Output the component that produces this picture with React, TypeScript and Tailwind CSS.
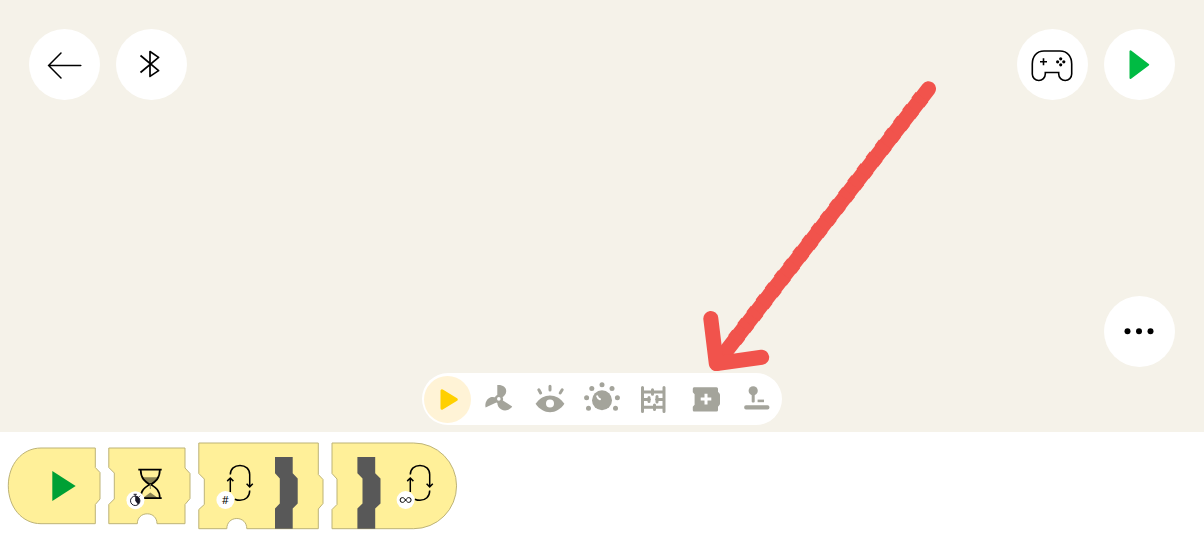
import React from 'react';

const toolbarItems = [
  { label: 'Start blocks', icon: <StartIcon /> },
  { label: 'Motor blocks', icon: <MotorIcon /> },
  { label: 'Sensor blocks', icon: <SensorIcon /> },
  { label: 'Light blocks', icon: <LightIcon /> },
  { label: 'Music blocks', icon: <TracksIcon /> },
  { label: 'Custom blocks', icon: <CustomIcon /> },
  { label: 'Control blocks', icon: <ControlIcon /> }
];

function StartIcon() {
  return (
    <svg viewBox="0 0 41 41" className="size-[41px]">
      <path d="M15 11.8V29.3L29.3 20.5Z" fill="#ffd000" stroke="#ffd000" strokeWidth="3" strokeLinejoin="round" />
    </svg>
  );
}

function MotorIcon() {
  return (
    <svg viewBox="0 0 41 41" className="size-[41px]" fill="#a4a49b">
      <path d="M18.3 6C23.5 5.6 27.6 8.3 27.2 12.4C27 15.3 25.2 17.2 23 18.2L18.3 17Z" />
      <path d="M6.6 28.6C5.6 24 8 19.6 11.6 18.3C13.3 17.6 15.4 17.9 16.9 18.5L17.3 23.6Z" />
      <path d="M33.2 27.4C30.2 31.5 25.8 32.5 22 30.2C19.3 28.5 18.2 26 18.4 23.4L23 21Z" />
      <circle cx="19.8" cy="20" r="4.3" />
      <circle cx="19.8" cy="19.9" r="1.8" fill="white" />
    </svg>
  );
}

function SensorIcon() {
  return (
    <svg viewBox="0 0 41 41" className="size-[41px]">
      <path d="M5.6 24.8C13 13.6 27 13.6 34.4 24.8C27 36 13 36 5.6 24.8Z" fill="#a4a49b" />
      <circle cx="20" cy="24.6" r="4" fill="white" />
      <path d="M20 7.2V11M8.8 10.8L10.6 14M32.2 10.8L30.2 14" stroke="#a4a49b" strokeWidth="3" strokeLinecap="round" />
    </svg>
  );
}

function LightIcon() {
  return (
    <svg viewBox="0 0 41 41" className="size-[41px]" fill="#a4a49b">
      <circle cx="20" cy="21.2" r="10" />
      <circle cx="20" cy="5.8" r="2.5" />
      <circle cx="9.8" cy="9.6" r="2.5" />
      <circle cx="30" cy="9.6" r="2.5" />
      <circle cx="4.6" cy="18.8" r="2.5" />
      <circle cx="35.4" cy="18.8" r="2.5" />
      <circle cx="6.5" cy="29.3" r="2.5" />
      <circle cx="33.5" cy="29.3" r="2.5" />
      <path d="M15.2 17.2Q15.8 19.4 18 20.2" fill="none" stroke="white" strokeWidth="2" strokeLinecap="round" />
    </svg>
  );
}

function TracksIcon() {
  return (
    <svg viewBox="0 0 41 41" className="size-[41px]">
      <path
        d="M9.5 8.5V32.5M31 8.5V32.5M9.5 13H31M9.5 20.5H16.5M23.5 20.5H31M9.5 28.3H31M19.5 10.8V15.2M16 18.5V22.5M24 17.5V23M21.5 26V30.6"
        fill="none"
        stroke="#a4a49b"
        strokeWidth="3"
        strokeLinecap="round"
      />
    </svg>
  );
}

function CustomIcon() {
  return (
    <svg viewBox="0 0 41 41" className="size-[41px]">
      <path
        d="M9 8.3H31.5Q33 8.3 33 9.8V12.8L34.5 14.6Q35 15.3 35 16.3V24.3Q35 25.3 34.5 26L33 27.8V31.2Q33 32.6 31.5 32.6H9Q7.8 32.6 7.8 31.2V27.8L9.6 25.8V15.3L7.8 13.3V9.8Q7.8 8.3 9 8.3Z"
        fill="#a4a49b"
      />
      <path d="M21 14.8V25.4M15.7 20.1H26.3" stroke="white" strokeWidth="3" />
    </svg>
  );
}

function ControlIcon() {
  return (
    <svg viewBox="0 0 41 41" className="size-[41px]" fill="#a4a49b">
      <circle cx="17.2" cy="11.8" r="4.6" />
      <rect x="15.7" y="12.4" width="3" height="11.2" rx="1" />
      <rect x="21.6" y="20.6" width="6.4" height="2.6" />
      <rect x="8.2" y="26.2" width="25.2" height="4.4" rx="1.8" />
    </svg>
  );
}

// White round button used around the canvas edges
function RoundButton({ label, children }: { label: string; children: React.ReactNode }) {
  return (
    <button aria-label={label} className="size-[71px] shrink-0 rounded-full bg-white flex items-center justify-center">
      {children}
    </button>
  );
}

function LoopArrows({ x }: { x: number }) {
  return (
    <g transform={`translate(${x} 0)`} fill="none" stroke="black" strokeWidth="1.5">
      <path d="M.3 32.5C.3 27 4.5 23.4 10 23.4C15.5 23.4 19.7 27 19.7 32.5V44.5M16.6 41.8L19.7 44.9L22.8 41.8" />
      <path d="M.3 50V36M-2.8 39.1L.3 36L3.4 39.1" />
      <path d="M19.7 48.5C19.7 54.8 15.5 58.3 10 58.3C8 58.3 6.3 57.9 4.8 57.2" />
    </g>
  );
}

function StartBlock() {
  return (
    <svg viewBox="0 0 92 78" className="w-[92px] h-[78px] overflow-visible">
      <path
        d="M33 1H87.3V20.5L92 25.5V52L87.3 57.5V76.7H33C14 76.7.3 60 .3 38.8C.3 17.5 14 1 33 1Z"
        fill="#fff099"
        stroke="#bdb377"
      />
      <path d="M44.3 24V54L67.7 39Z" fill="#00a034" />
    </svg>
  );
}

function WaitBlock() {
  return (
    <svg viewBox="0 0 82 78" className="w-[82px] h-[78px] overflow-visible">
      <path
        d="M.8 1H77V21L82 26.5V51.5L77 57.5V76.7H49C49 71 45 66.8 39.2 66.8C33.4 66.8 29.3 71 29.3 76.7H.8V57.5L6.3 52V26L.8 20.5Z"
        fill="#fff099"
        stroke="#bdb377"
      />
      <path d="M34 30.3H50.5C49 34 45.5 36 42.3 38.5C39 36 35.5 34 34 30.3Z" fill="#898252" />
      <path d="M35 51L42.3 45.5L50 51Z" fill="#898252" />
      <path
        d="M30.3 22.7H53.7M30.3 51.2H53.7M32.7 23C32.7 31.5 37 34.5 42.3 38C47.6 34.5 51.8 31.5 51.8 23M32.7 51C32.7 43 37 40.5 42.3 37C47.6 40.5 51.8 43 51.8 51"
        fill="none"
        stroke="black"
        strokeWidth="1.7"
      />
      <path d="M42.3 37V42" stroke="#898252" />
      <circle cx="27.4" cy="53.2" r="9" fill="white" />
      <circle cx="27.2" cy="53.8" r="4.7" fill="none" stroke="#191927" />
      <path d="M27.2 53.8V49.1A4.7 4.7 0 0 1 30 57.5Z" fill="#191927" />
      <path d="M27.2 49V47.4M25.6 47.3H28.8M31 49.8L32 48.8" stroke="#191927" />
    </svg>
  );
}

function RepeatBlock() {
  return (
    <svg viewBox="0 0 125 88" className="w-[125px] h-[88px] overflow-visible">
      <path
        d="M.8 1H120.3V32.5L125 37.5V61.5L120.3 67V86.7H48.8C48.8 80.7 44.6 76.5 38.8 76.5C33 76.5 28.8 80.7 28.8 86.7H.8V67.5L6.3 62.5V37L.8 31.5Z"
        fill="#fff099"
        stroke="#bdb377"
      />
      <path d="M77 15H94.7V31.3L99.7 36.5V61.5L94.7 66.5V86.7H77V66.5L81.8 61.5V36.5L77 31.3Z" fill="#585858" />
      <LoopArrows x={32} />
      <circle cx="27.4" cy="58" r="9" fill="white" />
      <text x="27.4" y="62" textAnchor="middle" className="font-['Open_Sans',sans-serif] text-[11px]">#</text>
    </svg>
  );
}

function ForeverBlock() {
  return (
    <svg viewBox="0 0 126 88" className="w-[126px] h-[88px] overflow-visible">
      <path
        d="M1 1H82.7A42.85 42.85 0 0 1 82.7 86.7H1V67.5L6 62.5V37L1 31.5Z"
        fill="#fff099"
        stroke="#bdb377"
      />
      <path d="M26.4 15H44.2V31.3L49.5 36.5V61.5L44.2 66.5V86.7H26.4V66.5L31.5 61.5V36.5L26.4 31.3Z" fill="#585858" />
      <LoopArrows x={79} />
      <circle cx="74.6" cy="58" r="9" fill="white" />
      <path
        d="M74.6 58C73.4 56.3 72.5 55.6 71.5 55.6A2.4 2.4 0 0 0 71.5 60.4C72.5 60.4 73.4 59.7 74.6 58C75.8 56.3 76.7 55.6 77.7 55.6A2.4 2.4 0 0 1 77.7 60.4C76.7 60.4 75.8 59.7 74.6 58Z"
        fill="none"
        stroke="black"
      />
    </svg>
  );
}

// Hand-drawn marker arrow that points down at the custom blocks tab
function PointerArrow() {
  return (
    <svg
      viewBox="0 0 234 290"
      className="absolute left-[281px] bottom-[54px] w-[234px] h-[290px] pointer-events-none"
      fill="none"
      stroke="#f1534c"
      aria-hidden="true"
    >
      <path d="M225.5 7.8L13.7 282.3" strokeWidth="15" strokeLinecap="round" />
      <path d="M219 16L30 261" strokeWidth="16" strokeDasharray="7 8" />
      <path d="M7.8 237.5L13.3 282.6L58.7 276.2" strokeWidth="15" strokeLinecap="round" strokeLinejoin="round" />
    </svg>
  );
}

export default function App() {
  return (
    <div className="min-h-screen flex flex-col bg-[#f5f2e9] overflow-hidden">
      <main className="flex-1 flex flex-col">
        <header className="flex items-center justify-between px-[29px] pt-[29px]">
          <div className="flex gap-4">
            <RoundButton label="Back">
              <svg viewBox="0 0 41 41" className="size-[41px]" fill="none" stroke="black" strokeWidth="1.5" strokeLinecap="round">
                <path d="M36.8 21.5H4.6M17 9L4.6 21.5L17 34" />
              </svg>
            </RoundButton>
            <RoundButton label="Connect with Bluetooth">
              <svg viewBox="0 0 41 41" className="size-[41px]" fill="none" stroke="black" strokeWidth="1.7" strokeLinejoin="round">
                <path d="M9.5 11.5L27.6 26.6L19 32.4V7.5L27.6 13.4L9.5 28.5" />
              </svg>
            </RoundButton>
          </div>
          <div className="flex gap-4">
            <RoundButton label="Remote control">
              <svg viewBox="0 0 45 41" className="w-[45px] h-[41px]">
                <path
                  d="M14 7H30C37.5 7 41.7 12.7 41.7 20V30A6.5 6.5 0 0 1 28.7 30V28.5H15.3V30A6.5 6.5 0 0 1 2.3 30V20C2.3 12.7 6.5 7 14 7Z"
                  fill="none"
                  stroke="black"
                  strokeWidth="1.6"
                />
                <path d="M13.5 14.3V21.3M10 17.8H17" stroke="black" strokeWidth="1.6" />
                <circle cx="30.7" cy="14.8" r="1.6" />
                <circle cx="30.7" cy="20.8" r="1.6" />
                <circle cx="27.6" cy="17.8" r="1.6" />
                <circle cx="33.8" cy="17.8" r="1.6" />
              </svg>
            </RoundButton>
            <RoundButton label="Play">
              <svg viewBox="0 0 41 41" className="size-[41px]">
                <path d="M11.5 7.3V34L29.2 20.7Z" fill="#00bb43" stroke="#00bb43" strokeWidth="2" strokeLinejoin="round" />
              </svg>
            </RoundButton>
          </div>
        </header>

        <div className="mt-auto flex justify-end px-[29px] pb-[6px]">
          <RoundButton label="More">
            <svg viewBox="0 0 41 41" className="size-[41px]">
              <circle cx="8.5" cy="20.3" r="3" />
              <circle cx="20" cy="20.3" r="3" />
              <circle cx="31.5" cy="20.3" r="3" />
            </svg>
          </RoundButton>
        </div>

        <div className="flex justify-center pb-[7px]">
          <nav className="relative w-[360px] h-[52px] rounded-full bg-white px-[2px] flex items-center justify-between">
            {toolbarItems.map((item, i) => (
              <button
                key={item.label}
                aria-label={item.label}
                className={`size-[47px] rounded-full flex items-center justify-center ${i === 0 ? 'bg-[#fff3d6]' : ''}`}
              >
                {item.icon}
              </button>
            ))}
            <PointerArrow />
          </nav>
        </div>
      </main>

      {/* Block tray */}
      <section className="h-[108px] shrink-0 bg-white flex items-center gap-2 px-2">
        <button aria-label="Start block"><StartBlock /></button>
        <button aria-label="Wait block"><WaitBlock /></button>
        <button aria-label="Repeat block"><RepeatBlock /></button>
        <button aria-label="Repeat forever block"><ForeverBlock /></button>
      </section>
    </div>
  );
}
